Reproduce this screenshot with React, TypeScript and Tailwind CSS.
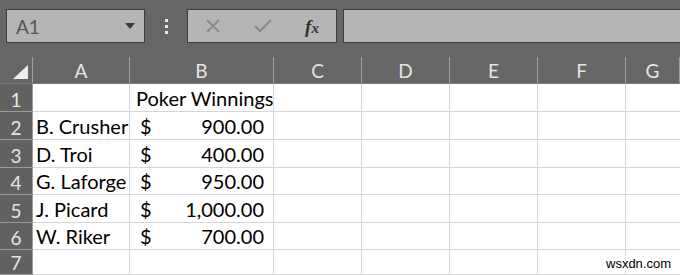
import React from "react";

const cols = [
  { label: "A", w: "w-[97px]" },
  { label: "B", w: "w-[144px]" },
  { label: "C", w: "w-[88px]" },
  { label: "D", w: "w-[88px]" },
  { label: "E", w: "w-[88px]" },
  { label: "F", w: "w-[88px]" },
  { label: "G", w: "flex-1" },
];

const rows: { n: string; h: string; name: string; b?: string; title?: string }[] = [
  { n: "1", h: "h-[28px]", name: "", title: "Poker Winnings" },
  { n: "2", h: "h-[28px]", name: "B. Crusher", b: "900.00" },
  { n: "3", h: "h-[28px]", name: "D. Troi", b: "400.00" },
  { n: "4", h: "h-[27px]", name: "G. Laforge", b: "950.00" },
  { n: "5", h: "h-[28px]", name: "J. Picard", b: "1,000.00" },
  { n: "6", h: "h-[27px]", name: "W. Riker", b: "700.00" },
  { n: "7", h: "h-[25px]", name: "" },
];

export default function App() {
  return (
    <div className="relative w-[680px] h-[275px] overflow-hidden bg-[#666666] font-['Lato',sans-serif]">
      {/* toolbar */}
      <div className="flex h-[57px] items-start pt-[9px]">
        <div className="ml-[6px] flex h-[34px] w-[139px] items-center border border-[#3d3d3d] bg-[#b5b5b5] pl-[9px] pr-[9px]">
          <span className="flex-1 text-[19px] leading-none text-[#555555]">A1</span>
          <svg width="10" height="6" viewBox="0 0 10 6">
            <path d="M0 0 L10 0 L5 6 Z" fill="#3a3a3a" />
          </svg>
        </div>
        <div className="flex h-[34px] w-[42px] flex-col items-center justify-center gap-[3px]">
          <div className="h-[3px] w-[3px] bg-[#e8e8e8]" />
          <div className="h-[3px] w-[3px] bg-[#e8e8e8]" />
          <div className="h-[3px] w-[3px] bg-[#e8e8e8]" />
        </div>
        <div className="flex h-[34px] w-[150px] items-center border border-[#3d3d3d] bg-[#b5b5b5]">
          <div className="flex w-[50px] justify-center">
            <svg width="16" height="16" viewBox="0 0 16 16">
              <path d="M2 2 L14 14 M14 2 L2 14" stroke="#8a8a8a" strokeWidth="1.8" />
            </svg>
          </div>
          <div className="flex w-[50px] justify-center">
            <svg width="20" height="16" viewBox="0 0 20 16">
              <path d="M2 8 L7 13 L18 2" stroke="#8a8a8a" strokeWidth="2.2" fill="none" />
            </svg>
          </div>
          <div className="flex w-[48px] justify-center">
            <span className="font-['Liberation_Serif',serif] text-[19px] font-bold italic leading-none text-[#333]">
              f<span className="text-[15px]">x</span>
            </span>
          </div>
        </div>
        <div className="ml-[6px] h-[34px] flex-1 border border-r-0 border-[#3d3d3d] bg-[#b5b5b5]" />
      </div>

      {/* header row */}
      <div className="flex h-[27px] border-b border-[#7a7a7a]">
        <div className="relative w-[33px] border-r border-[#9c9c9c]">
          <svg className="absolute left-[13px] top-[8px]" width="15" height="14" viewBox="0 0 15 14">
            <path d="M15 0 L15 14 L0 14 Z" fill="#ececec" />
          </svg>
        </div>
        {cols.map((c) => (
          <div
            key={c.label}
            className={`${c.w} flex items-center justify-center border-r border-[#9c9c9c] text-[19px] leading-none text-[#e4e4e4]`}
          >
            {c.label}
          </div>
        ))}
      </div>

      {/* body rows */}
      {rows.map((r) => (
        <div key={r.n} className={`flex ${r.h}`}>
          <div className="flex w-[33px] items-end justify-center border-r border-b border-r-[#9c9c9c] border-b-[#9a9a9a] bg-[#616161] pb-[2px] text-[19px] leading-none text-[#e4e4e4]">
            {r.n}
          </div>
          <div className="flex w-[97px] items-end border-r border-b border-[#d6d6d6] bg-white pb-[3px] pl-[3px] text-[20px] leading-none text-black">
            {r.name}
          </div>
          <div className="flex w-[144px] items-end whitespace-nowrap border-r border-b border-[#d6d6d6] bg-white pb-[3px] text-[20px] leading-none text-black">
            {r.title ? (
              <span className="pl-[6px]">{r.title}</span>
            ) : r.b ? (
              <>
                <span className="pl-[10px]">$</span>
                <span className="flex-1 pr-[9px] text-right">{r.b}</span>
              </>
            ) : null}
          </div>
          <div className="w-[88px] border-r border-b border-[#d6d6d6] bg-white" />
          <div className="w-[88px] border-r border-b border-[#d6d6d6] bg-white" />
          <div className="w-[88px] border-r border-b border-[#d6d6d6] bg-white" />
          <div className="w-[88px] border-r border-b border-[#d6d6d6] bg-white" />
          <div className="flex-1 border-b border-[#d6d6d6] bg-white" />
        </div>
      ))}

      {/* watermark */}
      <div className="absolute left-[603px] top-[256px] bg-white/70 px-[3px] font-['Liberation_Sans',sans-serif] text-[13px] leading-[16px] text-black">
        wsxdn.com
      </div>
    </div>
  );
}
